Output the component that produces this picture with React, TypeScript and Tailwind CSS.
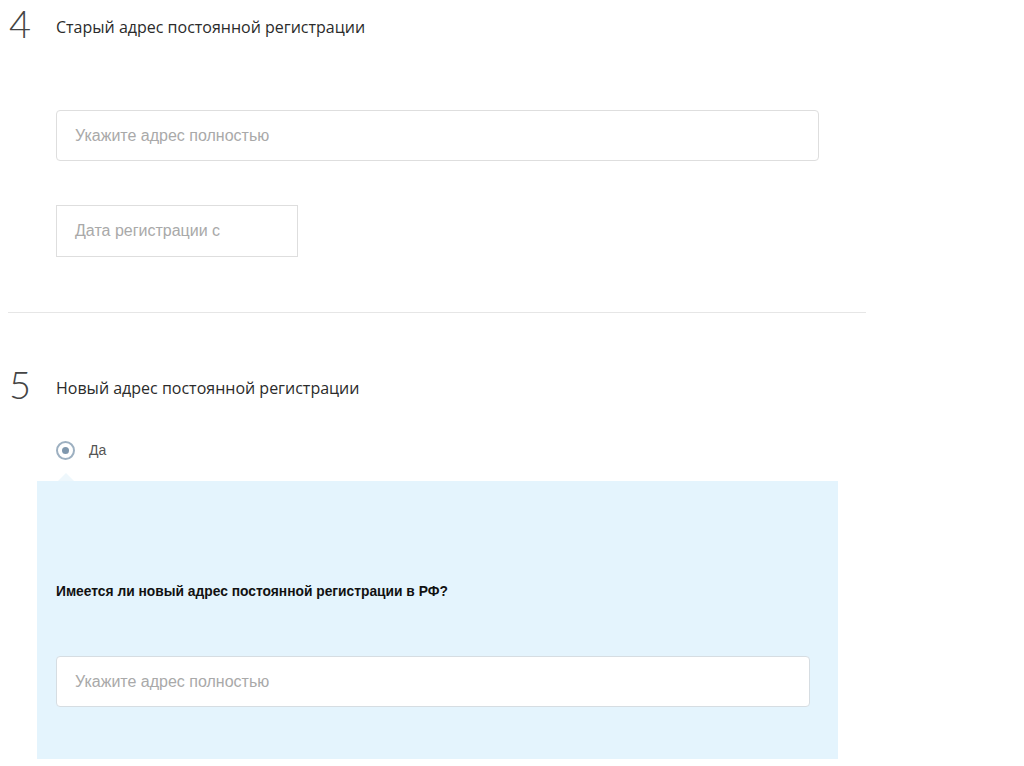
export default function App() {
  return (
    <div className="w-[1024px] h-[766px] overflow-hidden bg-white font-['Liberation_Sans',Arial,sans-serif]">
      <div className="pl-[8px] pt-[2px] w-[866px]">
        {/* step 4 */}
        <section className="pb-[55px]">
          <div className="flex items-start">
            <div className="w-[48px] pl-[1px] text-[38px] leading-[42px] font-light text-[#444] font-['Lato',sans-serif]">4</div>
            <h2 className="pt-[15px] text-[16px] leading-[20px] text-[#2b2b2b] font-['Open_Sans',sans-serif]">
              Старый адрес постоянной регистрации
            </h2>
          </div>
          <div className="pl-[48px] pt-[66px]">
            <div className="w-[763px] h-[51px] rounded-[4px] border border-[#dedede] flex items-center px-[18px] text-[16px] text-[#a9a9a9]">
              Укажите адрес полностью
            </div>
            <div className="mt-[44px] w-[242px] h-[52px] border border-[#dedede] flex items-center px-[18px] text-[16px] text-[#a9a9a9]">
              Дата регистрации с
            </div>
          </div>
        </section>
        <div className="h-px bg-[#e6e6e6]" />
        {/* step 5 */}
        <section className="pt-[50px]">
          <div className="flex items-start">
            <div className="w-[48px] pl-[1px] text-[38px] leading-[42px] font-light text-[#444] font-['Lato',sans-serif]">5</div>
            <h2 className="pt-[15px] text-[16px] leading-[20px] text-[#2b2b2b] font-['Open_Sans',sans-serif]">
              Новый адрес постоянной регистрации
            </h2>
          </div>
          <div className="pl-[48px] pt-[35px] flex items-center gap-[14px]">
            <span className="w-[19px] h-[19px] rounded-full border-2 border-[#9db0c1] flex items-center justify-center">
              <span className="w-[7px] h-[7px] rounded-full bg-[#7f97ad]" />
            </span>
            <span className="text-[14px] text-[#555]">Да</span>
          </div>
          <div className="relative ml-[29px] mt-[20px] w-[801px] h-[278px] bg-[#e4f4fd] px-[19px]">
            <div className="absolute left-[21px] -top-[8px] w-0 h-0 border-l-[8px] border-r-[8px] border-b-[8px] border-l-transparent border-r-transparent border-b-[#eef7fc]" />
            <p className="pt-[102px] text-[13.8px] leading-[18px] font-bold text-[#111]">
              Имеется ли новый адрес постоянной регистрации в РФ?
            </p>
            <div className="mt-[55px] w-[754px] h-[51px] rounded-[4px] border border-[#d6dde2] bg-white flex items-center px-[18px] text-[16px] text-[#a9a9a9]">
              Укажите адрес полностью
            </div>
          </div>
        </section>
      </div>
    </div>
  );
}
